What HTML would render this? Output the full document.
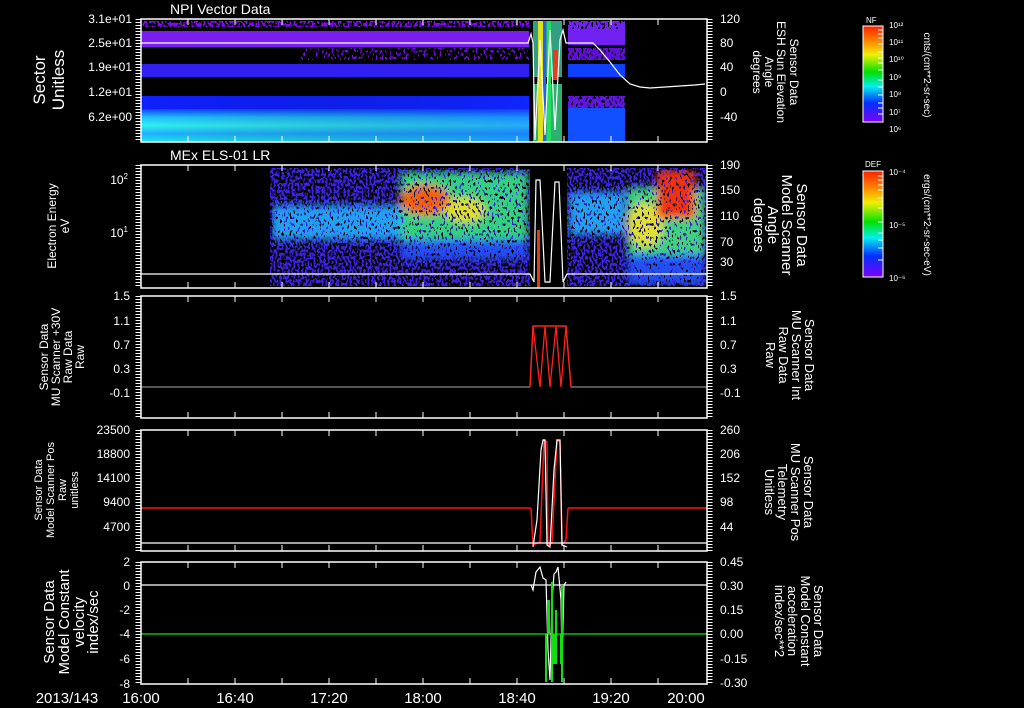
<!DOCTYPE html>
<html><head><meta charset="utf-8"><style>
html,body{margin:0;padding:0;background:#000;}
svg{display:block;}
text{font-family:"Liberation Sans","DejaVu Sans",sans-serif;fill:#fff;}
</style></head><body>
<svg width="1024" height="708" viewBox="0 0 1024 708" xmlns="http://www.w3.org/2000/svg">
<defs>
<linearGradient id="cb" x1="0" y1="0" x2="0" y2="1">
<stop offset="0" stop-color="#ff2000"/><stop offset="0.15" stop-color="#ff8000"/><stop offset="0.3" stop-color="#f0f000"/><stop offset="0.48" stop-color="#00e000"/><stop offset="0.63" stop-color="#00f0f0"/><stop offset="0.8" stop-color="#0030ff"/><stop offset="1" stop-color="#8000ff"/>
</linearGradient>
<linearGradient id="cy" x1="0" y1="0" x2="0" y2="1">
<stop offset="0" stop-color="#1040ff"/><stop offset="0.25" stop-color="#20c0ff"/><stop offset="0.5" stop-color="#30f0f0"/><stop offset="0.75" stop-color="#20b0ff"/><stop offset="1" stop-color="#20e8f0"/>
</linearGradient>
<linearGradient id="cyh" x1="0" y1="0" x2="1" y2="0">
<stop offset="0" stop-color="#000" stop-opacity="0"/><stop offset="1" stop-color="#1030ff" stop-opacity="0.35"/>
</linearGradient>
<filter id="sp" x="0" y="0" width="100%" height="100%">
<feTurbulence type="fractalNoise" baseFrequency="0.5 0.3" numOctaves="1" seed="3" result="n"/>
<feColorMatrix in="n" type="matrix" values="0 0 0 0 0  0 0 0 0 0  0 0 0 0 0  1 0 0 0 0" result="a"/>
<feComponentTransfer in="a" result="t"><feFuncA type="discrete" tableValues="0 0 0 0 0 1 1 1 1 1"/></feComponentTransfer>
<feComposite in="SourceGraphic" in2="t" operator="in"/>
</filter>
<filter id="spd" x="0" y="0" width="100%" height="100%">
<feTurbulence type="fractalNoise" baseFrequency="0.5 0.3" numOctaves="1" seed="7" result="n"/>
<feColorMatrix in="n" type="matrix" values="0 0 0 0 0  0 0 0 0 0  0 0 0 0 0  1 0 0 0 0" result="a"/>
<feComponentTransfer in="a" result="t"><feFuncA type="discrete" tableValues="0 0 0 0 1 1 1 1 1 1"/></feComponentTransfer>
<feComposite in="SourceGraphic" in2="t" operator="in"/>
</filter>
<filter id="sps" x="0" y="0" width="100%" height="100%">
<feTurbulence type="fractalNoise" baseFrequency="0.5 0.3" numOctaves="1" seed="11" result="n"/>
<feColorMatrix in="n" type="matrix" values="0 0 0 0 0  0 0 0 0 0  0 0 0 0 0  1 0 0 0 0" result="a"/>
<feComponentTransfer in="a" result="t"><feFuncA type="discrete" tableValues="0 0 0 0 0 0 1 1 1 1"/></feComponentTransfer>
<feComposite in="SourceGraphic" in2="t" operator="in"/>
</filter>
<filter id="bl" x="-50%" y="-50%" width="200%" height="200%"><feGaussianBlur stdDeviation="6"/></filter>
<filter id="bl2" x="-50%" y="-50%" width="200%" height="200%"><feGaussianBlur stdDeviation="4"/></filter>
<clipPath id="p2"><rect x="141" y="165" width="566" height="123"/></clipPath>
</defs>

<!-- ===== Panel 1 ===== -->
<text x="170" y="14" font-size="14">NPI Vector Data</text>
<g filter="url(#sp)"><rect x="141" y="21" width="388" height="6" fill="#7a10e8"/></g>
<rect x="141" y="31" width="388" height="16" fill="#7a1ef0"/>
<g filter="url(#sps)"><rect x="300" y="48" width="229" height="12" fill="#6a10d8"/></g>
<rect x="141" y="64" width="388" height="13" fill="#3020f0"/>
<rect x="141" y="96" width="388" height="13" fill="#1020ff"/>
<rect x="141" y="109" width="388" height="33" fill="url(#cy)"/>
<rect x="141" y="96" width="388" height="46" fill="url(#cyh)"/>
<rect x="533" y="21" width="30" height="56" fill="#30a080"/>
<rect x="533" y="84" width="30" height="58" fill="#30b070"/>
<rect x="538" y="21" width="5" height="121" fill="#e0e020"/>
<rect x="547" y="21" width="4" height="121" fill="#20e060"/>
<rect x="553" y="50" width="5" height="30" fill="#e04020"/>
<rect x="543" y="21" width="3" height="121" fill="#2060ff"/>
<rect x="529" y="21" width="3" height="121" fill="#000"/>
<rect x="562" y="21" width="5" height="121" fill="#000"/>
<g filter="url(#spd)"><rect x="568" y="21" width="57" height="8" fill="#7020f0"/></g>
<rect x="568" y="29" width="57" height="16" fill="#7020f0"/>
<g filter="url(#spd)"><rect x="568" y="48" width="57" height="12" fill="#6010d8"/></g>
<rect x="568" y="64" width="57" height="13" fill="#1040ff"/>
<g filter="url(#spd)"><rect x="568" y="96" width="57" height="12" fill="#6018e0"/></g>
<rect x="568" y="108" width="57" height="34" fill="#1050ff"/>
<polyline points="141,43 528,43 531,34 533,43 535,140 540,40 545,135 550,30 555,130 560,40 563,30 566,43 593,43 600,50 610,62 620,75 630,84 640,87 650,88 665,87 680,86 695,85 705,84" fill="none" stroke="#fff" stroke-width="1.2"/>
<rect x="141" y="19" width="566" height="123" fill="none" stroke="#fff" stroke-width="1.5"/>

<!-- ===== Panel 2 ===== -->
<g clip-path="url(#p2)">
<g filter="url(#sp)">
<rect x="270" y="168" width="437" height="118" fill="#3a20e0"/>
</g>
<g filter="url(#spd)"><g filter="url(#bl2)">
<rect x="272" y="205" width="128" height="35" fill="#20a0f0"/>
<rect x="400" y="172" width="128" height="68" fill="#30d080"/>
<rect x="569" y="192" width="56" height="43" fill="#20a0f0"/>
<rect x="627" y="187" width="78" height="68" fill="#40d080"/>
<rect x="627" y="255" width="78" height="30" fill="#2050f0"/>
<rect x="400" y="240" width="128" height="20" fill="#2050f0"/>
<ellipse cx="425" cy="200" rx="25" ry="15" fill="#f06010"/>
<ellipse cx="465" cy="210" rx="20" ry="12" fill="#e0e020"/>
<ellipse cx="645" cy="225" rx="18" ry="22" fill="#e0e030"/>
<rect x="657" y="170" width="38" height="48" fill="#f03010"/>
</g></g>
<rect x="530" y="168" width="37" height="118" fill="#000"/>
<rect x="537" y="230" width="3" height="58" fill="#e04010"/>
</g>
<polyline points="141,274 530,274 534,282 536,180 540,180 545,282 550,282 555,182 559,182 563,282 567,274 707,274" fill="none" stroke="#fff" stroke-width="1.2"/>
<rect x="141" y="165" width="566" height="123" fill="none" stroke="#fff" stroke-width="1.5"/>

<!-- ===== Panel 3 ===== -->
<line x1="141" y1="387" x2="530" y2="387" stroke="#aaa" stroke-width="1"/>
<line x1="571" y1="387" x2="707" y2="387" stroke="#aaa" stroke-width="1"/>
<polyline points="530,387 533,326 566,326 571,387" fill="none" stroke="#ff2020" stroke-width="1.5"/>
<polyline points="533,326 540,387 545,326 550,387 556,326 561,387 566,326" fill="none" stroke="#ff2020" stroke-width="1.3"/>
<rect x="141" y="296" width="566" height="122" fill="none" stroke="#fff" stroke-width="1.5"/>

<!-- ===== Panel 4 ===== -->
<line x1="141" y1="508" x2="531" y2="508" stroke="#ff1010" stroke-width="1.5"/>
<line x1="568" y1="508" x2="707" y2="508" stroke="#ff1010" stroke-width="1.5"/>
<polyline points="531,508 533,545 540,542 544,440 547,442 548,545 552,543 557,440 560,442 562,545 566,540 568,508" fill="none" stroke="#ff1010" stroke-width="1.5"/>
<polyline points="533,547 537,520 541,450 543,440 545,440 547,545 550,547 554,470 557,440 560,440 562,545 567,547" fill="none" stroke="#fff" stroke-width="1.2"/>
<line x1="141" y1="543" x2="707" y2="543" stroke="#fff" stroke-width="1.2"/>
<rect x="141" y="430" width="566" height="121" fill="none" stroke="#fff" stroke-width="1.5"/>

<!-- ===== Panel 5 ===== -->
<line x1="141" y1="585" x2="707" y2="585" stroke="#fff" stroke-width="1.2"/>
<line x1="141" y1="634" x2="707" y2="634" stroke="#10e010" stroke-width="1.2"/>
<polyline points="531,585 533,590 536,572 540,567 543,578 546,580 548,650 550,680 552,600 554,574 556,572 558,567 561,600 562,660 564,585 566,582" fill="none" stroke="#fff" stroke-width="1.2"/>
<g fill="#10e010"><rect x="545" y="634" width="2" height="48"/><rect x="547" y="600" width="3" height="34"/><rect x="551" y="582" width="2" height="100"/><rect x="553" y="634" width="4" height="30"/><rect x="555" y="610" width="2" height="24"/><rect x="561" y="585" width="2" height="97"/><rect x="560" y="634" width="2" height="30"/></g>
<rect x="141" y="562" width="566" height="122" fill="none" stroke="#fff" stroke-width="1.5"/>

<g stroke="#fff" stroke-width="1">
<path d="M188,19v6M235,19v6M282,19v6M329,19v6M376,19v6M423,19v6M470,19v6M517,19v6M564,19v6M611,19v6M658,19v6M188,142v-6M235,142v-6M282,142v-6M329,142v-6M376,142v-6M423,142v-6M470,142v-6M517,142v-6M564,142v-6M611,142v-6M658,142v-6"/>
<path d="M188,165v6M235,165v6M282,165v6M329,165v6M376,165v6M423,165v6M470,165v6M517,165v6M564,165v6M611,165v6M658,165v6M188,288v-6M235,288v-6M282,288v-6M329,288v-6M376,288v-6M423,288v-6M470,288v-6M517,288v-6M564,288v-6M611,288v-6M658,288v-6"/>
<path d="M188,296v6M235,296v6M282,296v6M329,296v6M376,296v6M423,296v6M470,296v6M517,296v6M564,296v6M611,296v6M658,296v6M188,418v-6M235,418v-6M282,418v-6M329,418v-6M376,418v-6M423,418v-6M470,418v-6M517,418v-6M564,418v-6M611,418v-6M658,418v-6"/>
<path d="M188,430v6M235,430v6M282,430v6M329,430v6M376,430v6M423,430v6M470,430v6M517,430v6M564,430v6M611,430v6M658,430v6M188,551v-6M235,551v-6M282,551v-6M329,551v-6M376,551v-6M423,551v-6M470,551v-6M517,551v-6M564,551v-6M611,551v-6M658,551v-6"/>
<path d="M188,562v6M235,562v6M282,562v6M329,562v6M376,562v6M423,562v6M470,562v6M517,562v6M564,562v6M611,562v6M658,562v6M188,684v-6M235,684v-6M282,684v-6M329,684v-6M376,684v-6M423,684v-6M470,684v-6M517,684v-6M564,684v-6M611,684v-6M658,684v-6"/>
</g>
<g stroke="#fff" stroke-width="5" stroke-dasharray="1 2">
<line x1="138" y1="19" x2="138" y2="142"/><line x1="710" y1="19" x2="710" y2="142"/>
<line x1="138" y1="165" x2="138" y2="288"/><line x1="710" y1="165" x2="710" y2="288"/>
<line x1="138" y1="296" x2="138" y2="418"/><line x1="710" y1="296" x2="710" y2="418"/>
<line x1="138" y1="430" x2="138" y2="551"/><line x1="710" y1="430" x2="710" y2="551"/>
<line x1="138" y1="562" x2="138" y2="684"/><line x1="710" y1="562" x2="710" y2="684"/>
</g>

<g font-size="12" text-anchor="end">
<text x="132" y="23">3.1e+01</text><text x="132" y="47">2.5e+01</text><text x="132" y="71">1.9e+01</text><text x="132" y="96">1.2e+01</text><text x="132" y="121">6.2e+00</text>
<text x="128" y="184">10<tspan font-size="8" dy="-5">2</tspan></text><text x="128" y="237">10<tspan font-size="8" dy="-5">1</tspan></text>
<text x="130" y="300">1.5</text><text x="130" y="325">1.1</text><text x="130" y="349">0.7</text><text x="130" y="373">0.3</text><text x="130" y="397">-0.1</text>
<text x="130" y="434">23500</text><text x="130" y="458">18800</text><text x="130" y="482">14100</text><text x="130" y="506">9400</text><text x="130" y="531">4700</text>
<text x="130" y="566">2</text><text x="130" y="590">0</text><text x="130" y="614">-2</text><text x="130" y="638">-4</text><text x="130" y="663">-6</text><text x="130" y="688">-8</text>
</g>
<g font-size="12">
<text x="720" y="23">120</text><text x="720" y="47">80</text><text x="720" y="71">40</text><text x="720" y="96">0</text><text x="720" y="121">-40</text>
<text x="720" y="169">190</text><text x="720" y="194">150</text><text x="720" y="220">110</text><text x="720" y="246">70</text><text x="720" y="266">30</text>
<text x="720" y="300">1.5</text><text x="720" y="325">1.1</text><text x="720" y="349">0.7</text><text x="720" y="373">0.3</text><text x="720" y="397">-0.1</text>
<text x="720" y="434">260</text><text x="720" y="458">206</text><text x="720" y="482">152</text><text x="720" y="506">98</text><text x="720" y="531">44</text>
<text x="720" y="566">0.45</text><text x="720" y="590">0.30</text><text x="720" y="614">0.15</text><text x="720" y="638">0.00</text><text x="720" y="663">-0.15</text><text x="720" y="687">-0.30</text>
</g>
<g font-size="15" text-anchor="middle">
<text x="67" y="703">2013/143</text>
<text x="141" y="703">16:00</text><text x="235" y="703">16:40</text><text x="329" y="703">17:20</text><text x="423" y="703">18:00</text><text x="517" y="703">18:40</text><text x="611" y="703">19:20</text><text x="686" y="703">20:00</text>
</g>
<text x="170" y="160" font-size="14">MEx ELS-01 LR</text>

<g text-anchor="middle">
<g transform="translate(45,80) rotate(-90)" font-size="17"><text x="0" y="0">Sector</text><text x="0" y="19">Unitless</text></g>
<g transform="translate(56,226) rotate(-90)" font-size="12"><text x="0" y="0">Electron Energy</text><text x="0" y="13">eV</text></g>
<g transform="translate(48,357) rotate(-90)" font-size="12"><text x="0" y="0">Sensor Data</text><text x="0" y="12">MU Scanner +30V</text><text x="0" y="24">Raw Data</text><text x="0" y="36">Raw</text></g>
<g transform="translate(42,490) rotate(-90)" font-size="11"><text x="0" y="0">Sensor Data</text><text x="0" y="12">Model Scanner Pos</text><text x="0" y="24">Raw</text><text x="0" y="36">unitless</text></g>
<g transform="translate(54,622) rotate(-90)" font-size="15"><text x="0" y="0">Sensor Data</text><text x="0" y="15">Model Constant</text><text x="0" y="30">velocity</text><text x="0" y="44">index/sec</text></g>
</g>
<g text-anchor="middle">
<g transform="translate(790,72) rotate(90)" font-size="12"><text x="0" y="0">Sensor Data</text><text x="0" y="13">ESH Sun Elevation</text><text x="0" y="25">Angle</text><text x="0" y="37">degrees</text></g>
<g transform="translate(797,225) rotate(90)" font-size="15"><text x="0" y="0">Sensor Data</text><text x="0" y="15">Model Scanner</text><text x="0" y="29">Angle</text><text x="0" y="43">degrees</text></g>
<g transform="translate(805,355) rotate(90)" font-size="13"><text x="0" y="0" fill="#ff2020">Sensor Data</text><text x="0" y="13" fill="#ff2020">MU Scanner Int</text><text x="0" y="26" fill="#ff2020">Raw Data</text><text x="0" y="39" fill="#ff2020">Raw</text></g>
<g transform="translate(804,492) rotate(90)" font-size="13"><text x="0" y="0" fill="#ff2020">Sensor Data</text><text x="0" y="13" fill="#ff2020">MU Scanner Pos</text><text x="0" y="26" fill="#ff2020">Telemetry</text><text x="0" y="39" fill="#ff2020">Unitless</text></g>
<g transform="translate(814,621) rotate(90)" font-size="13"><text x="0" y="0" fill="#20ff20">Sensor Data</text><text x="0" y="13" fill="#20ff20">Model Constant</text><text x="0" y="26" fill="#20ff20">acceleration</text><text x="0" y="39" fill="#20ff20">index/sec**2</text></g>
</g>

<rect x="863" y="26" width="20" height="96" fill="url(#cb)" stroke="#fff" stroke-width="1"/>
<g stroke="#fff" stroke-width="1"><path d="M878,30h5M878,34h5M878,38h5M878,44h5M878,52h5M878,58h5M878,63h5M878,70h5M878,80h5M878,87h5M878,95h5M878,103h5M878,108h5M878,114h5"/></g>
<text x="866" y="23" font-size="8">NF</text>
<g font-size="8"><text x="889" y="28">10¹²</text><text x="889" y="45">10¹¹</text><text x="889" y="62">10¹⁰</text><text x="889" y="80">10⁹</text><text x="889" y="97">10⁸</text><text x="889" y="115">10⁷</text><text x="889" y="132">10⁶</text></g>
<g transform="translate(924,75) rotate(90)" font-size="10" text-anchor="middle"><text x="0" y="0">cnts/(cm**2-sr-sec)</text></g>
<rect x="863" y="171" width="20" height="106" fill="url(#cb)" stroke="#fff" stroke-width="1"/>
<g stroke="#fff" stroke-width="1"><path d="M878,176h5M878,180h5M878,185h5M878,190h5M878,198h5M878,208h5M878,222h5M878,233h5M878,240h5M878,248h5M878,260h5"/></g>
<text x="865" y="167" font-size="8">DEF</text>
<g font-size="8"><text x="889" y="175">10⁻⁴</text><text x="889" y="228">10⁻⁵</text><text x="889" y="281">10⁻⁶</text></g>
<g transform="translate(924,225) rotate(90)" font-size="10" text-anchor="middle"><text x="0" y="0">ergs/(cm**2-sr-sec-eV)</text></g>
</svg>
</body></html>
